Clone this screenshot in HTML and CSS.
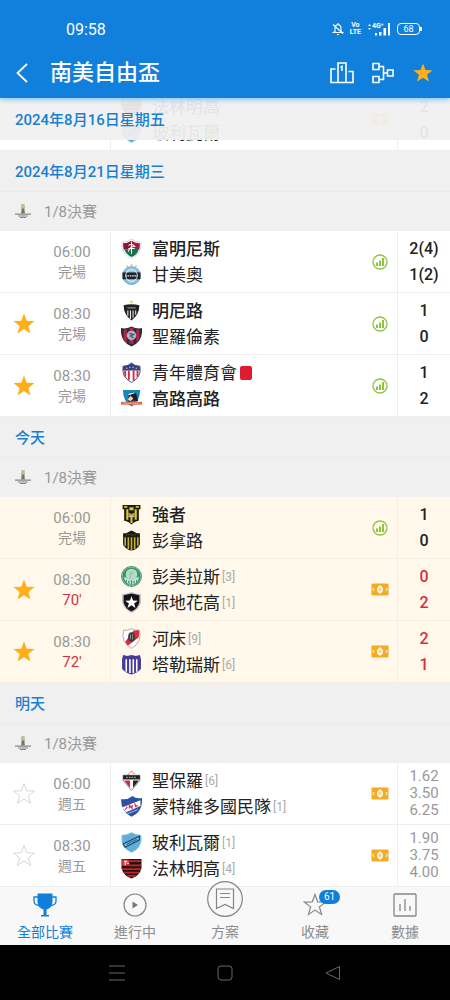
FILE: index.html
```html
<!DOCTYPE html>
<html lang="zh-Hant">
<head>
    <meta charset="UTF-8">
    <meta name="viewport" content="width=device-width, initial-scale=1.0">
    <title>南美自由盃</title>
    <link rel="stylesheet" href="styles.css">
</head>
<body>

<!-- Shared icons and club crests -->
<svg class="sprite" aria-hidden="true">
    <symbol id="star" viewBox="0 0 24 24"><path d="M12 1.5l2.7 7.3 7.8.3-6.1 4.8 2.1 7.5-6.5-4.3-6.5 4.3 2.1-7.5L1.5 9.1l7.8-.3z"/></symbol>
    <symbol id="stats" viewBox="0 0 16 16"><circle cx="8" cy="8" r="7" fill="none" stroke="#8fc442" stroke-width="1.3"/><path d="M4 8.500h2V12H4zM7 6.500h2V12H7zM10 4h2v8h-2z" fill="#8fc442"/></symbol>
    <symbol id="tip" viewBox="0 0 18 13"><rect x="0.5" y="0.5" width="17" height="12" rx="1" fill="#f3ab22"/><ellipse cx="9" cy="6.500" rx="2.200" ry="2.800" fill="none" stroke="#fff" stroke-width="1.4"/><path d="M9 2v9M3 5L2 6.500 3 8M15 5l1 1.500L15 8" fill="none" stroke="#fff" stroke-width="1"/></symbol>
    <symbol id="cup" viewBox="0 0 18 18"><path d="M7.500 2h3l.6 3.500-.6 4H7.500l-.6-4z" fill="#c4bb9c"/><path d="M8 6.500h2l1 5H7z" fill="#77746a"/><path d="M1 11.500h16v1.200H1zM4 13.500h10v1H4zM6 15h6v1H6z" fill="#858585"/></symbol>

    <symbol id="fluminense" viewBox="0 0 20 20"><path d="M1 4q5 0 9-3 4 3 9 3v4q-1 8-9 11.500Q2 16 1 8z" fill="#fff" stroke="#999" stroke-width=".4"/><path d="M2 5q4 0 8-2.500V11H2.500Q2 8 2 5z" fill="#8c1536"/><path d="M10 2.500Q14 5 18 5q0 3-.5 6H10z" fill="#a31d40"/><path d="M3 11l14-1q-1 6-7 8-5-2-7-7z" fill="#16734a"/><path d="M10 4v11M7 7q4-2 6 1-5 0-6 5M7 10h6" fill="none" stroke="#fff" stroke-width="1"/></symbol>
    <symbol id="gremio" viewBox="0 0 20 20"><circle cx="10" cy="11" r="8.500" fill="#8bc6e9" stroke="#4f8caf" stroke-width=".7"/><path d="M1.500 8h17v6.500h-17z" fill="#20242a"/><circle cx="10" cy="11" r="5.500" fill="none" stroke="#fff" stroke-width=".8"/><path d="M4 11.300h12" stroke="#d6e7f0" stroke-width="1.200" stroke-dasharray="1.500 .7"/><path d="M5 2h1.500M9.300 1h1.500M13.500 2H15" stroke="#c9b064" stroke-width="1.300"/></symbol>
    <symbol id="mineiro" viewBox="0 0 20 20"><path d="M10 0l.6 1.200 1.300.2-1 .8.2 1.300-1.100-.6-1.100.6.200-1.300-1-.8 1.300-.2z" fill="#e8ce55"/><path d="M2.500 5q7.500-2 15 0 0 9-7.500 14.500Q2.500 14 2.500 5z" fill="#222"/><path d="M6.500 10v5M9 10v8M11.500 10v7M14 10v4" stroke="#eee" stroke-width="1"/><path d="M6 7.500h8" stroke="#999" stroke-width="1"/></symbol>
    <symbol id="sanlorenzo" viewBox="0 0 20 20"><path d="M0 2q5 1 10-1.500Q15 3 20 2q1 13-10 17.500Q-1 15 0 2z" fill="#252b45"/><path d="M2.500 3.500v9l3 4V3zM8 2v15h4V2zM14.500 3v13l3-4V3.500z" fill="#b42838"/><circle cx="10" cy="9" r="4.500" fill="#aeb4c0"/><path d="M8 7l4 1-3 1.500 3 2" fill="none" stroke="#33538b" stroke-width="1.200"/></symbol>
    <symbol id="junior" viewBox="0 0 20 20"><path d="M2 4q5 0 8-3 3 3 8 3 2 10-8 15.500Q0 14 2 4z" fill="#fff" stroke="#28346d" stroke-width=".8"/><path d="M2 4q5 0 8-3 3 3 8 3v4H2z" fill="#34427f"/><path d="M4 8v6M7.500 8v9M12 8v9.500M15.700 8v6" stroke="#cf2d3f" stroke-width="1.800"/><path d="M5 6h1M8 5h1M11 5h1M14 6h1" stroke="#fff" stroke-width="1"/></symbol>
    <symbol id="colocolo" viewBox="0 0 22 20"><path d="M2 1h18q0 12-9 17.500Q2 13 2 1z" fill="#1686bb"/><path d="M8 6l5-3 3 2 2 8-5-1-5 2z" fill="#17202e"/><path d="M10 7l-3 4 3 2 3-3z" fill="#f2d2b5"/><path d="M8 6l6-2" stroke="#fff" stroke-width="1.300"/><path d="M0 13.500h22v3H0z" fill="#e36a49"/><path d="M3 15h16" stroke="#fff" stroke-width=".8" stroke-dasharray="1 1"/></symbol>
    <symbol id="strongest" viewBox="0 0 20 20"><path d="M1.500 1h17v4H17v11q-3 0-7 3.500Q6 16 3 16V5H1.500z" fill="#1d1b16"/><path d="M5 5h2v10H5zM13 5h2v10h-2zM8 3h4v3H8zM9 12h2v6H9zM3 2h3v1.500H3zM14 2h3v1.500h-3z" fill="#e1c52f"/><path d="M7 8l3 1.500L13 8v3l-3 2-3-2z" fill="#bfa92e"/><path d="M7 12h6" stroke="#ddd" stroke-width=".8"/></symbol>
    <symbol id="penarol" viewBox="0 0 20 20"><path d="M2 3h3l2-1 3-1.500L13 2l2 1h3v11q-3 5-8 5.500Q5 19 2 14z" fill="#1b1a15"/><path d="M4 7v8M7 7v11M10 7v12M13 7v11M16 7v8" stroke="#c6b32e" stroke-width="1.500"/><path d="M5 4.500h10" stroke="#6f672a" stroke-width="1" stroke-dasharray="1 1"/></symbol>
    <symbol id="palmeiras" viewBox="0 0 20 20"><circle cx="10" cy="10" r="9.900" fill="#36916a"/><circle cx="10" cy="10" r="8.900" fill="none" stroke="#a5d3be" stroke-width=".6"/><circle cx="10" cy="8" r="5.500" fill="#b6dcc9"/><path d="M8 5.500h4v2.500H9.500v4H8z" fill="#9bcdb4"/><path d="M3 10l3 2 4 2 4-2 3-2q0 7-7 8-7-1-7-8z" fill="#d4eadf"/><path d="M5 13v3M7.500 14v3M10 14v4M12.500 14v3M15 13v3" stroke="#36916a" stroke-width="1.200"/></symbol>
    <symbol id="botafogo" viewBox="0 0 20 20"><path d="M1 2l4-.5L10 0l5 1.500 4 .5v8q-2 7-9 10-7-3-9-10z" fill="#c8c8c8"/><path d="M2.500 3L10 1.500 17.500 3v7Q16 16 10 18.500 4 16 2.500 10z" fill="#151515"/><path d="M10 4l1.500 4.200 4.500.1-3.500 2.600 1.300 4.300L10 12.600l-3.800 2.600 1.300-4.300L4 8.300l4.500-.1z" fill="#fff"/></symbol>
    <symbol id="river" viewBox="0 0 20 20"><path d="M2.500 2q4 1 7.500-1.500Q13.500 3 17.500 2q3 11-7.500 17.500Q-.5 13 2.500 2z" fill="#fff" stroke="#aaa" stroke-width=".9"/><path d="M12 2.300l5-.2q1 4-.3 7L6.500 17 4 13z" fill="#d5303b"/><ellipse cx="10" cy="8.500" rx="3.200" ry="4.500" fill="#373b42"/><path d="M9 6v5M11 6v5" stroke="#bbb" stroke-width=".6"/></symbol>
    <symbol id="talleres" viewBox="0 0 20 20"><path d="M2 1l4 1 4-1 4 1 4-1 1 4v9q-3 4-9 5.500Q4 18 1 14V5z" fill="#463c96"/><path d="M5 5v12M8.500 5v13M11.700 5v13M15 5v12" stroke="#fff" stroke-width="1.500"/></symbol>
    <symbol id="saopaulo" viewBox="0 0 20 20"><path d="M6.500 4.500L10 1l3.500 3.500" fill="none" stroke="#df8077" stroke-width="1.300" stroke-dasharray="1.500 1"/><path d="M2 5h16v5l-8 9.500L2 10z" fill="#fff" stroke="#555" stroke-width=".6"/><path d="M2 5h16v4H2z" fill="#222"/><path d="M3 10h5.500v7z" fill="#cf2637"/><path d="M17 10h-5.500v7z" fill="#222"/><path d="M5 7h10" stroke="#aaa" stroke-width="1.300" stroke-dasharray="1.500 1"/></symbol>
    <symbol id="nacional" viewBox="0 0 20 20"><path d="M0 3Q6 4 11 0q3 3 9 2 1 13-10 17.700Q0 15 0 3z" fill="#2d51a5"/><path d="M1 11L18.500 4v5.500L5 15.500z" fill="#fff"/><path d="M4 13l2-2.500M8 12V9l2.500 2.500v-3M13 7l1 3 2-1" fill="none" stroke="#d73845" stroke-width="1.300"/><path d="M6 17l10-4" stroke="#dce4f4" stroke-width=".7"/></symbol>
    <symbol id="bolivar" viewBox="0 0 20 20"><path d="M1 3q5 0 9-2.500Q14 3 19 3q2 12-9 16.500Q-1 15 1 3z" fill="#62aedb" stroke="#8ccaea" stroke-width=".6"/><path d="M2 11.500L17.500 4v3.500L4 14.500z" fill="#7cc4ea" stroke="#17466b" stroke-width="1.100"/><path d="M5 12l10-5" stroke="#17466b" stroke-width=".8"/></symbol>
    <symbol id="flamengo" viewBox="0 0 20 20"><path d="M.5 1h19v9q-2 7-9.500 9.500Q2.500 17 .5 10z" fill="#241414"/><path d="M8 3h11M8 7h11M1 10.500h18M3 14h14M6 17h8" stroke="#c4242c" stroke-width="1.700"/><path d="M1 1.500h7v6H1z" fill="#d6353c"/><path d="M3 3h3M4 3v4M5.500 5h2" stroke="#fff" stroke-width="1"/></symbol>
</svg>

<div class="app">

    <header class="top">
        <div class="status">
            <span class="clock">09:58</span>
            <div class="status-icons">
                <svg width="12" height="14" viewBox="0 0 12 14" fill="none" stroke="#fff" stroke-width="1.1"><path d="M3 9.500V6q0-3 3-3.500Q9 3 9 6v3.500l1.500 1h-9zM5 12.500h2M6 1v1M1 2.500l10 9"/></svg>
                <span class="volte">Vo<br>LTE</span>
                <span class="signal">
                    <span class="net">4G⁺</span>
                    <svg width="24" height="14" viewBox="0 0 24 14" fill="#fff"><path d="M1 4l1.500-2L4 4zM1 6h3L2.500 8zM8 11h2v2.500H8zM12 10h2.500v3.500H12zM16.500 6h2.500v7.500h-2.500zM21 1h2v12.500h-2z"/></svg>
                </span>
                <span class="battery">68</span>
            </div>
        </div>
        <div class="bar">
            <button type="button" class="back" aria-label="返回">
                <svg width="12" height="20" viewBox="0 0 12 20" fill="none" stroke="#fff" stroke-width="1.8"><path d="M11 1L1.500 10l9.500 9"/></svg>
            </button>
            <h1>南美自由盃</h1>
            <button type="button" aria-label="排名">
                <svg width="24" height="22" viewBox="0 0 24 22" fill="none" stroke="#fff" stroke-width="1.6"><path d="M8 20.500V1h8v19.500M5.500 7H1v13.500h22V9.500h-4.500M10.500 5.500L12 4.500V9"/></svg>
            </button>
            <button type="button" aria-label="賽程">
                <svg width="22" height="22" viewBox="0 0 22 22" fill="none" stroke="#fff" stroke-width="1.6"><path d="M1 1.500h6v6H1zM1 14.500h6v6H1zM15.500 8h5.500v6h-5.500zM7 4.500h4.500v13H7M11.500 11h4"/></svg>
            </button>
            <button type="button" aria-label="收藏聯賽">
                <svg class="star-on" width="22" height="22"><use href="#star"/></svg>
            </button>
        </div>
    </header>

    <main class="list">
        <h2 class="day day-stuck">2024年8月16日星期五</h2>

        <section class="scrolled">
            <div class="match">
                <span></span>
                <div class="time"></div>
                <div class="teams">
                    <div class="team win"><svg class="crest"><use href="#flamengo"/></svg>法林明高</div>
                    <div class="team"><svg class="crest"><use href="#bolivar"/></svg>玻利瓦爾</div>
                </div>
                <div class="mark"><svg class="tip"><use href="#tip"/></svg></div>
                <div class="score"><span>2</span><span>0</span></div>
            </div>
        </section>

        <section>
            <h2 class="day">2024年8月21日星期三</h2>
            <h3 class="round"><svg><use href="#cup"/></svg>1/8決賽</h3>
            <div class="match">
                <span></span>
                <div class="time"><span>06:00</span><span class="state">完場</span></div>
                <div class="teams">
                    <div class="team win"><svg class="crest"><use href="#fluminense"/></svg>富明尼斯</div>
                    <div class="team"><svg class="crest"><use href="#gremio"/></svg>甘美奧</div>
                </div>
                <div class="mark"><svg class="stats"><use href="#stats"/></svg></div>
                <div class="score"><span>2(4)</span><span>1(2)</span></div>
            </div>
            <div class="match">
                <button type="button" class="fav" aria-label="取消收藏"><svg class="star-on"><use href="#star"/></svg></button>
                <div class="time"><span>08:30</span><span class="state">完場</span></div>
                <div class="teams">
                    <div class="team win"><svg class="crest"><use href="#mineiro"/></svg>明尼路</div>
                    <div class="team"><svg class="crest"><use href="#sanlorenzo"/></svg>聖羅倫素</div>
                </div>
                <div class="mark"><svg class="stats"><use href="#stats"/></svg></div>
                <div class="score"><span>1</span><span>0</span></div>
            </div>
            <div class="match">
                <button type="button" class="fav" aria-label="取消收藏"><svg class="star-on"><use href="#star"/></svg></button>
                <div class="time"><span>08:30</span><span class="state">完場</span></div>
                <div class="teams">
                    <div class="team"><svg class="crest"><use href="#junior"/></svg>青年體育會<i class="red-card"></i></div>
                    <div class="team win"><svg class="crest"><use href="#colocolo"/></svg>高路高路</div>
                </div>
                <div class="mark"><svg class="stats"><use href="#stats"/></svg></div>
                <div class="score"><span>1</span><span>2</span></div>
            </div>
        </section>

        <section class="today">
            <h2 class="day">今天</h2>
            <h3 class="round"><svg><use href="#cup"/></svg>1/8決賽</h3>
            <div class="match">
                <span></span>
                <div class="time"><span>06:00</span><span class="state">完場</span></div>
                <div class="teams">
                    <div class="team win"><svg class="crest"><use href="#strongest"/></svg>強者</div>
                    <div class="team"><svg class="crest"><use href="#penarol"/></svg>彭拿路</div>
                </div>
                <div class="mark"><svg class="stats"><use href="#stats"/></svg></div>
                <div class="score"><span>1</span><span>0</span></div>
            </div>
            <div class="match live">
                <button type="button" class="fav" aria-label="取消收藏"><svg class="star-on"><use href="#star"/></svg></button>
                <div class="time"><span>08:30</span><span class="minute">70'</span></div>
                <div class="teams">
                    <div class="team"><svg class="crest"><use href="#palmeiras"/></svg>彭美拉斯<small>[3]</small></div>
                    <div class="team"><svg class="crest"><use href="#botafogo"/></svg>保地花高<small>[1]</small></div>
                </div>
                <div class="mark"><svg class="tip"><use href="#tip"/></svg></div>
                <div class="score"><span>0</span><span>2</span></div>
            </div>
            <div class="match live">
                <button type="button" class="fav" aria-label="取消收藏"><svg class="star-on"><use href="#star"/></svg></button>
                <div class="time"><span>08:30</span><span class="minute">72'</span></div>
                <div class="teams">
                    <div class="team"><svg class="crest"><use href="#river"/></svg>河床<small>[9]</small></div>
                    <div class="team"><svg class="crest"><use href="#talleres"/></svg>塔勒瑞斯<small>[6]</small></div>
                </div>
                <div class="mark"><svg class="tip"><use href="#tip"/></svg></div>
                <div class="score"><span>2</span><span>1</span></div>
            </div>
        </section>

        <section>
            <h2 class="day">明天</h2>
            <h3 class="round"><svg><use href="#cup"/></svg>1/8決賽</h3>
            <div class="match">
                <button type="button" class="fav" aria-label="收藏"><svg class="star-off"><use href="#star"/></svg></button>
                <div class="time"><span>06:00</span><span class="state">週五</span></div>
                <div class="teams">
                    <div class="team"><svg class="crest"><use href="#saopaulo"/></svg>聖保羅<small>[6]</small></div>
                    <div class="team"><svg class="crest"><use href="#nacional"/></svg>蒙特維多國民隊<small>[1]</small></div>
                </div>
                <div class="mark"><svg class="tip"><use href="#tip"/></svg></div>
                <div class="odds"><span>1.62</span><span>3.50</span><span>6.25</span></div>
            </div>
            <div class="match">
                <button type="button" class="fav" aria-label="收藏"><svg class="star-off"><use href="#star"/></svg></button>
                <div class="time"><span>08:30</span><span class="state">週五</span></div>
                <div class="teams">
                    <div class="team"><svg class="crest"><use href="#bolivar"/></svg>玻利瓦爾<small>[1]</small></div>
                    <div class="team"><svg class="crest"><use href="#flamengo"/></svg>法林明高<small>[4]</small></div>
                </div>
                <div class="mark"><svg class="tip"><use href="#tip"/></svg></div>
                <div class="odds"><span>1.90</span><span>3.75</span><span>4.00</span></div>
            </div>
        </section>
    </main>

    <nav class="tabs">
        <a href="#" class="tab active">
            <svg width="24" height="24" viewBox="0 0 24 24"><path d="M4.500.5h15V9q-.5 6-6 7.500V22H16v1.500H8V22h2.500v-5.500Q5 15 4.500 9z" fill="#0f7fda"/><path d="M5 4H1v4q0 4 5 4.500M19 4h4v4q0 4-5 4.500" fill="none" stroke="#0f7fda" stroke-width="1.3"/></svg>
            全部比賽
        </a>
        <a href="#" class="tab">
            <svg width="24" height="24" viewBox="0 0 24 24"><circle cx="12" cy="12" r="11" fill="none" stroke="#858585" stroke-width="1.2"/><path d="M9.500 8.500l5.500 3.500-5.500 3.500z" fill="#777"/></svg>
            進行中
        </a>
        <a href="#" class="tab">
            <svg width="36" height="36" viewBox="0 0 36 36" fill="none" stroke="#858585" stroke-width="1.2"><circle cx="18" cy="18" r="17.300" fill="#f8f8f8"/><path d="M9.500 8h17v19.500L18 23.500l-8.500 4zM13 12.500h10M13 16.500h10"/></svg>
            方案
        </a>
        <a href="#" class="tab">
            <svg width="24" height="24" viewBox="0 0 24 24" fill="none" stroke="#858585" stroke-width="1.2"><use href="#star"/></svg>
            <span class="count">61</span>
            收藏
        </a>
        <a href="#" class="tab">
            <svg width="24" height="24" viewBox="0 0 24 24" fill="none" stroke="#858585" stroke-width="1.3"><rect x="1" y="1" width="22" height="22" rx="1"/><path d="M7 11v7M12 6v12M17 13v5"/></svg>
            數據
        </a>
    </nav>

    <footer class="system">
        <button type="button" aria-label="最近"><svg width="16" height="16" viewBox="0 0 16 16"><path d="M0 1h16M0 8h16M0 15h16"/></svg></button>
        <button type="button" aria-label="主畫面"><svg width="16" height="16" viewBox="0 0 16 16"><rect x="1" y="1" width="14" height="14" rx="3"/></svg></button>
        <button type="button" aria-label="上一頁"><svg width="16" height="16" viewBox="0 0 16 16"><path d="M14.500 1.500v13L1 8z"/></svg></button>
    </footer>
</div>

</body>
</html>
```
FILE: styles.css
```css
* {
    box-sizing: border-box;
}

body {
    margin: 0;
    font-family: Roboto, "Noto Sans CJK TC", sans-serif;
    font-size: 15px;
    color: #222;
    background: #000;
}

button {
    display: flex;
    align-items: center;
    justify-content: center;
    padding: 0;
    border: none;
    background: none;
    cursor: pointer;
}

h1, h2, h3 {
    margin: 0;
    font-weight: 500;
}

.sprite {
    display: none;
}

.app {
    display: flex;
    flex-direction: column;
    height: 100vh;
}

/* Header */
.top {
    position: relative;
    z-index: 3;
    flex: none;
    background: #1180dc;
    color: #fff;
    box-shadow: 0 2px 5px rgba(130, 195, 248, 0.9);
}

.status {
    display: flex;
    align-items: center;
    justify-content: space-between;
    height: 48px;
    padding: 10px 30px 0 66px;
}

.clock {
    font-size: 16px;
}

.status-icons {
    display: flex;
    align-items: center;
    gap: 6px;
}

.volte {
    font-size: 7px;
    line-height: 7px;
    font-weight: 700;
    text-align: center;
}

.signal {
    position: relative;
    display: flex;
}

.net {
    position: absolute;
    top: 0;
    left: 5px;
    font-size: 7px;
    line-height: 8px;
    font-weight: 700;
}

.battery {
    position: relative;
    width: 23px;
    border: 1px solid #fff;
    border-radius: 4px;
    font-size: 9px;
    line-height: 10px;
    text-align: center;
}

.battery::after {
    content: "";
    position: absolute;
    top: 3px;
    right: -3px;
    width: 2px;
    height: 4px;
    background: #fff;
}

.bar {
    display: flex;
    align-items: center;
    gap: 18px;
    height: 50px;
    padding: 0 16px;
}

.bar h1 {
    flex: 1;
    padding-left: 4px;
    font-size: 22px;
    line-height: 32px;
}

/* Match list */
.list {
    position: relative;
    flex: 1;
    min-height: 0;
    overflow-y: auto;
    scrollbar-width: none;
    background: #fff;
}

.scrolled {
    margin-top: -51px;
}

.day {
    padding: 2px 15px 0;
    border-bottom: 1px solid #ebebeb;
    background: #f0f0f0;
    color: #1a7fcd;
    font-size: 15px;
    line-height: 38px;
}

.day-stuck {
    position: sticky;
    top: 0;
    z-index: 2;
    border-bottom: none;
    background: rgba(240, 240, 240, 0.94);
    line-height: 40px;
}

.round {
    display: flex;
    align-items: center;
    gap: 12px;
    height: 39px;
    padding: 0 14px 2px;
    background: #f0f0f0;
    color: #999;
    font-size: 15px;
    font-weight: 400;
}

.round svg {
    width: 18px;
    height: 18px;
}

.match {
    display: grid;
    grid-template-columns: 48px 62px 1fr 34px 53px;
    align-items: stretch;
    height: 62px;
    border-bottom: 1px solid #eee;
    background: #fff;
}

.today .match {
    background: #fff8eb;
    border-color: #f5eee1;
}

.fav svg {
    width: 24px;
    height: 24px;
}

.star-on {
    fill: #fdae19;
}

.star-off {
    fill: none;
    stroke: #d8d8d8;
    stroke-width: 1;
}

.time {
    display: flex;
    flex-direction: column;
    justify-content: center;
    padding-right: 14px;
    color: #999;
    line-height: 20px;
    text-align: center;
}

.state {
    font-size: 14px;
}

.minute {
    color: #d3303f;
}

.teams {
    display: flex;
    flex-direction: column;
    justify-content: center;
    padding-left: 10px;
    border-left: 1px solid #eee;
}

.today .teams,
.today .score {
    border-color: #f5eee1;
}

.team {
    display: flex;
    align-items: center;
    font-size: 17px;
    line-height: 26px;
    white-space: nowrap;
}

.win {
    font-weight: 500;
}

.crest {
    width: 21px;
    height: 21px;
    margin-right: 10px;
}

.team small {
    margin-left: 2px;
    color: #aaa;
    font-size: 12px;
}

.red-card {
    width: 12px;
    height: 14px;
    margin-left: 3px;
    border-radius: 2px;
    background: #e01b2f;
}

.mark {
    display: flex;
    align-items: center;
    justify-content: center;
}

.stats {
    width: 16px;
    height: 16px;
}

.tip {
    width: 18px;
    height: 13px;
}

.score,
.odds {
    display: flex;
    flex-direction: column;
    justify-content: center;
    border-left: 1px solid #eee;
    text-align: center;
}

.score {
    font-size: 16px;
    font-weight: 500;
    line-height: 26px;
}

.live .score {
    color: #d3303f;
}

.odds {
    color: #999;
    line-height: 17px;
}

/* Bottom tabs */
.tabs {
    position: relative;
    z-index: 2;
    display: grid;
    grid-template-columns: repeat(5, 1fr);
    grid-template-rows: 58px;
    flex: none;
    background: #f8f8f8;
}

/* the round plan icon is taller than the bar and sticks out at the top */
.tab {
    position: relative;
    display: flex;
    flex-direction: column;
    align-items: center;
    justify-content: flex-end;
    gap: 6px;
    padding-bottom: 4px;
    color: #8c8c8c;
    font-size: 14px;
    line-height: 18px;
    text-decoration: none;
}

.tab svg {
    flex: none;
}

.active {
    color: #0f7fda;
}

.count {
    position: absolute;
    top: 3px;
    left: calc(50% + 4px);
    width: 21px;
    border-radius: 7px;
    background: #0f7fda;
    color: #fff;
    font-size: 10px;
    line-height: 14px;
    text-align: center;
}

/* Phone navigation */
.system {
    display: grid;
    grid-template-columns: repeat(3, 1fr);
    flex: none;
    height: 55px;
    padding: 0 14%;
    background: #000;
}

.system svg {
    fill: none;
    stroke: #686868;
    stroke-width: 1;
}
```
